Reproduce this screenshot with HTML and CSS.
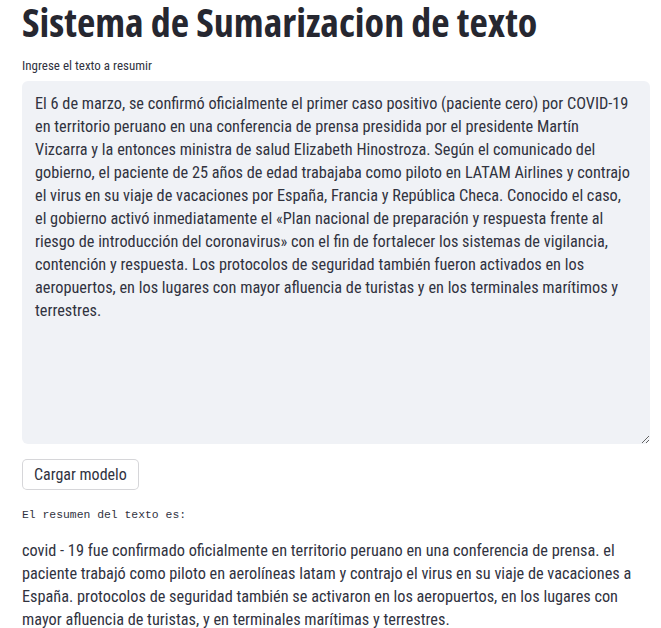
FILE: index.html
```html
<!DOCTYPE html>
<html lang="es">
<head>
<meta charset="utf-8">
<title>Sistema de Sumarizacion de texto</title>
<link rel="stylesheet" href="styles.css">
</head>
<body>
<main class="app">
  <h1 class="title">Sistema de Sumarizacion de texto</h1>
  <label class="label" for="texto">Ingrese el texto a resumir</label>
  <textarea id="texto" class="input">El 6 de marzo, se confirmó oficialmente el primer caso positivo (paciente cero) por COVID-19
en territorio peruano en una conferencia de prensa presidida por el presidente Martín
Vizcarra y la entonces ministra de salud Elizabeth Hinostroza. Según el comunicado del
gobierno, el paciente de 25 años de edad trabajaba como piloto en LATAM Airlines y contrajo
el virus en su viaje de vacaciones por España, Francia y República Checa. Conocido el caso,
el gobierno activó inmediatamente el «Plan nacional de preparación y respuesta frente al
riesgo de introducción del coronavirus» con el fin de fortalecer los sistemas de vigilancia,
contención y respuesta. Los protocolos de seguridad también fueron activados en los
aeropuertos, en los lugares con mayor afluencia de turistas y en los terminales marítimos y
terrestres.</textarea>
  <button class="btn" type="button">Cargar modelo</button>
  <pre class="mono">El resumen del texto es:</pre>
  <p class="summary">covid - 19 fue confirmado oficialmente en territorio peruano en una conferencia de prensa. el paciente trabajó como piloto en aerolíneas latam y contrajo el virus en su viaje de vacaciones a España. protocolos de seguridad también se activaron en los aeropuertos, en los lugares con mayor afluencia de turistas, y en terminales marítimas y terrestres.</p>
</main>
</body>
</html>
```
FILE: styles.css
```css
html, body {
  margin: 0;
  padding: 0;
  background: #ffffff;
}
body {
  font-family: "Roboto Condensed", "Liberation Sans", sans-serif;
  color: #31333f;
}
.app {
  display: flex;
  flex-direction: column;
  align-items: flex-start;
  width: 628px;
  padding: 0 11px 0 22px;
}
.title {
  margin: 0;
  font-family: "Open Sans", sans-serif;
  font-stretch: 75%;
  font-size: 40px;
  line-height: 44px;
  font-weight: 700;
  color: #262730;
}
.label {
  margin-top: 14px;
  font-size: 13px;
  line-height: 16px;
  color: #31333f;
}
.input {
  margin-top: 7px;
  box-sizing: border-box;
  width: 628px;
  height: 363px;
  padding: 11px 13px;
  border: none;
  border-radius: 6px;
  background: #f0f2f6;
  font-family: inherit;
  font-size: 16.3px;
  line-height: 23px;
  color: #31333f;
  resize: vertical;
  outline: none;
}
.btn {
  margin-top: 15px;
  box-sizing: border-box;
  height: 31px;
  padding: 0 11px;
  border: 1px solid rgba(49, 51, 63, 0.2);
  border-radius: 5px;
  background: #ffffff;
  font-family: inherit;
  font-size: 16px;
  line-height: 18px;
  color: #31333f;
}
.mono {
  margin: 18px 0 0;
  font-family: "Liberation Mono", monospace;
  font-size: 11.4px;
  line-height: 14px;
  color: #31333f;
}
.summary {
  margin: 17px 0 0;
  font-size: 16.3px;
  line-height: 23px;
  color: #31333f;
}
```
